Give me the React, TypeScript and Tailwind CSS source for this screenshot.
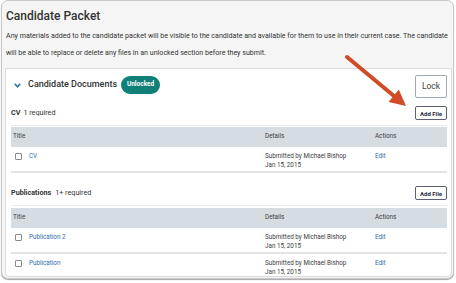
import React from "react";

function Checkbox() {
  return <span className="inline-block w-[7px] h-[7px] border border-[#8a8a8a] rounded-[1px] bg-white shrink-0" />;
}

type Row = { title: string };

function Table({ rows, pad }: { rows: Row[]; pad: string }) {
  return (
    <div className={"border-t border-[#ececec] " + pad}>
      <div className="flex h-[20px] items-center bg-[#d5dce2] text-[6.3px] text-[#3d3d3d]">
        <div className="w-[252px] pl-[2px]">Title</div>
        <div className="w-[110px] pl-[2px]">Details</div>
        <div className="flex-1 pl-[2px]">Actions</div>
      </div>
      {rows.map((r, i) => (
        <div key={i} className="flex h-[26px] pt-[5px] border-b-[2px] border-[#e3e3e3] text-[6.3px] leading-[9px]">
          <div className="w-[252px] flex items-start pl-[4px] gap-[7px]">
            <span className="mt-[1px]"><Checkbox /></span>
            <span className="text-[#2d6fae]">{r.title}</span>
          </div>
          <div className="w-[110px] pl-[2px] text-[#3d3d3d]">
            <div>Submitted by Michael Bishop</div>
            <div>Jan 15, 2015</div>
          </div>
          <div className="flex-1 pl-[2px] text-[#2d6fae]">Edit</div>
        </div>
      ))}
    </div>
  );
}

function AddFile() {
  return (
    <div className="w-[32px] h-[14px] border border-[#5a6070] rounded-[2px] flex items-center justify-center text-[6px] font-bold text-[#1f2a44] bg-white">
      Add File
    </div>
  );
}

export default function App() {
  return (
    <div className="relative w-[456px] h-[283px] bg-white overflow-hidden" style={{ fontFamily: "Roboto, 'Liberation Sans', sans-serif" }}>
      <div className="ml-[1px] w-[453px] h-[279px] border border-[#c8c8c8] rounded-[7px] bg-[#f5f5f5] shadow-[0_1px_1px_rgba(0,0,0,0.35)] pl-[3px] pr-[1px] flex flex-col">
        <div className="pl-[1px] pt-[5px] h-[67px]">
          <div className="text-[12px] font-medium text-[#333] leading-[20px]">Candidate Packet</div>
          <div className="w-[443px] text-[7.1px] text-[#333] leading-[17px] mt-[1px]">
            Any materials added to the candidate packet will be visible to the candidate and available for them to use in their current case. The candidate will be able to replace or delete any files in an unlocked section before they submit.
          </div>
        </div>
        <div className="h-[209px] bg-white border border-[#dcdcdc] rounded-b-[5px] pl-[5px] pr-[4px] overflow-hidden">
          <div className="flex items-center h-[32px]">
            <svg width="7" height="5" viewBox="0 0 7 5" className="ml-[3px]">
              <path d="M0.8 0.8 L3.5 3.8 L6.2 0.8" fill="none" stroke="#2d6fae" strokeWidth="1.6" />
            </svg>
            <span className="ml-[7px] text-[9px] font-medium text-[#333]">Candidate Documents</span>
            <span className="ml-[4px] h-[18px] w-[39px] justify-center rounded-full bg-[#0f7f78] text-white text-[6.5px] font-bold flex items-center">Unlocked</span>
            <div className="ml-auto mt-[3px] w-[32px] h-[23px] border border-[#a0a8b0] rounded-[2px] flex items-center justify-center text-[8.5px] text-[#444]">Lock</div>
          </div>
          <div className="flex items-center justify-between h-[24px]">
            <div className="text-[7.2px] text-[#333]"><span className="font-bold">CV</span><span className="ml-[3px]">1 required</span></div>
            <AddFile />
          </div>
          <Table rows={[{ title: "CV" }]} pad="pt-[1px]" />
          <div className="flex items-center justify-between h-[24px] mt-[8px]">
            <div className="text-[7.2px] text-[#333]"><span className="font-bold">Publications</span><span className="ml-[4px]">1+ required</span></div>
            <AddFile />
          </div>
          <Table rows={[{ title: "Publication 2" }, { title: "Publication" }]} pad="pt-[2px]" />
        </div>
      </div>
      <svg className="absolute left-0 top-0 pointer-events-none" width="456" height="283">
        <line x1="347" y1="57" x2="394" y2="96" stroke="#d04b26" strokeWidth="4" strokeLinecap="round" />
        <polygon points="406,106 388.6,102 398.8,89.6" fill="#d04b26" />
      </svg>
    </div>
  );
}
